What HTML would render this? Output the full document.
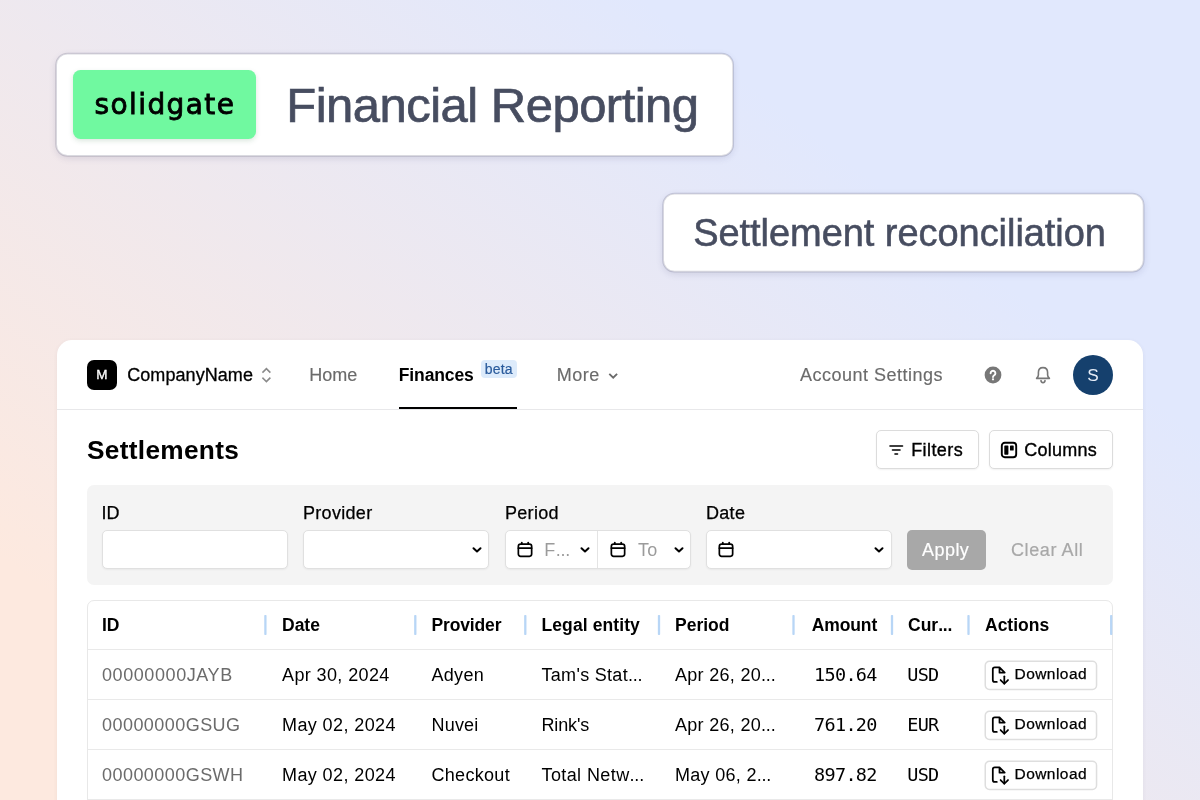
<!DOCTYPE html>
<html lang="en">
<head>
<meta charset="utf-8">
<title>Solidgate Financial Reporting – Settlement reconciliation</title>
<style>
*{box-sizing:border-box;margin:0;padding:0}
html,body{width:1200px;height:800px;overflow:hidden}
body{position:relative;font-family:"Liberation Sans",sans-serif;color:#000;
 background:linear-gradient(38deg,#fde9df 14%,#e1e8fd 75%);}
.abs,.t{position:absolute}
.t{white-space:nowrap;line-height:1;}
.cardsh{position:absolute;border-radius:11px;box-shadow:0 2px 7px 1px rgba(70,70,120,.16);}
.slate{color:#474d60}
#panel{position:absolute;left:57px;top:340px;width:1086px;height:480px;background:#fff;border-radius:15px 15px 0 0;
 box-shadow:0 1px 4px rgba(90,70,90,.07);}
.gray{color:#6b6b6b}
.btn{position:absolute;background:#fff;border:1px solid #dcdcdc;border-radius:5px;box-shadow:0 1px 2px rgba(0,0,0,.06)}
.inp{position:absolute;background:#fff;border:1px solid #e0e0e0;border-radius:5px;box-shadow:0 1px 2px rgba(0,0,0,.05);height:39px;top:530px}
.lbl{font-size:18px;top:503.800px;-webkit-text-stroke:.25px #000}
.sep{position:absolute;top:615px;width:2px;height:20px;background:#b7d5f4;border-radius:1px}
.hl{position:absolute;left:88px;width:1024px;height:1px;background:#e9e9e9}
.th{font-size:17.5px;font-weight:700;top:616.5px}
.td{font-size:18px}
.mono{font-family:"DejaVu Sans Mono","Liberation Mono",monospace;font-size:18.500px;letter-spacing:-.7px;margin-top:.1px}
.el{letter-spacing:-.2px}
.r1{top:666px}.r2{top:716px}.r3{top:766px}
.dlt{left:1014.500px;font-size:15.500px;letter-spacing:.45px;-webkit-text-stroke:.25px #000}
</style>
</head>
<body>
<div id="root" style="position:absolute;left:0;top:0;width:1200px;height:800px;will-change:transform">

<!-- Title card -->
<div class="cardsh" style="left:57px;top:55px;width:675px;height:100px"></div>
<svg class="abs" style="left:50px;top:48px" width="690" height="114"><rect x="6.125" y="5.625" width="677" height="102.250" rx="11.300" fill="#fff" stroke="rgba(56,56,92,.19)" stroke-width="1.750"/></svg>
<div class="abs" style="left:72.5px;top:70px;width:183px;height:69px;background:#70f9a0;border-radius:7.5px;box-shadow:0 2px 5px rgba(60,120,80,.18)"></div>
<div class="t" id="logo" style="left:94.5px;top:91px;font-family:'DejaVu Sans','Liberation Sans',sans-serif;font-size:28px;letter-spacing:1.4px;-webkit-text-stroke:.8px #000">solidgate</div>
<div class="t slate" id="h1" style="left:286.300px;top:81px;font-size:49px;letter-spacing:-.52px;-webkit-text-stroke:.7px #474d60">Financial Reporting</div>

<!-- Subtitle card -->
<div class="cardsh" style="left:664px;top:195px;width:479px;height:76px"></div>
<svg class="abs" style="left:657px;top:188px" width="494" height="90"><rect x="6.125" y="5.625" width="480.500" height="78" rx="11.300" fill="#fff" stroke="rgba(56,56,92,.19)" stroke-width="1.750"/></svg>
<div class="t slate" id="h2" style="left:693.200px;top:214px;font-size:38px;letter-spacing:-.05px;-webkit-text-stroke:.55px #474d60">Settlement reconciliation</div>

<!-- App panel -->
<div id="panel"></div>

<!-- nav -->
<div class="abs" style="left:87px;top:360px;width:30px;height:30px;background:#000;border-radius:7px"></div>
<div class="t" style="left:96.3px;top:368.300px;font-size:13.5px;color:#fff;-webkit-text-stroke:.3px #fff">M</div>
<div class="t" id="cn" style="left:127.200px;top:366px;font-size:18px;letter-spacing:.07px;-webkit-text-stroke:.3px #000">CompanyName</div>
<svg class="abs" style="left:260px;top:366px" width="14" height="18" viewBox="0 0 14 18" fill="none" stroke="#8a8a8a" stroke-width="1.600" stroke-linecap="square" stroke-linejoin="miter"><path d="M3 6 L6.400 2.600 L9.800 6"/><path d="M3 12.200 L6.400 15.600 L9.800 12.200"/></svg>
<div class="t gray" id="home" style="left:309.200px;top:366px;font-size:18px;letter-spacing:0px;-webkit-text-stroke:.15px #6b6b6b">Home</div>
<div class="t" id="fin" style="left:398.7px;top:367px;font-size:17.5px;font-weight:700;letter-spacing:-.1px">Finances</div>
<div class="abs" style="left:480.5px;top:360px;width:36.5px;height:17.5px;background:#ddebfb;border-radius:4px"></div>
<div class="t" id="beta" style="left:484.700px;top:362.300px;font-size:14px;color:#2a5b9c;letter-spacing:.2px;-webkit-text-stroke:.2px #2a5b9c">beta</div>
<div class="abs" style="left:399px;top:407px;width:118px;height:3px;background:#000"></div>
<div class="t gray" id="more" style="left:556.800px;top:366px;font-size:18px;letter-spacing:.5px;-webkit-text-stroke:.15px #6b6b6b">More</div>
<svg class="abs" style="left:607px;top:370px" width="12" height="12" viewBox="0 0 12 12" fill="none" stroke="#6b6b6b" stroke-width="1.850" stroke-linecap="butt" stroke-linejoin="miter"><path d="M2.300 3.800 L6.200 7.700 L10.100 3.800"/></svg>
<div class="t gray" id="acc" style="left:800px;top:366px;font-size:18px;letter-spacing:.5px;-webkit-text-stroke:.15px #6b6b6b">Account Settings</div>
<!-- help -->
<svg class="abs" style="left:984px;top:366px" width="18" height="18" viewBox="0 0 18 18"><circle cx="9" cy="9" r="8.4" fill="#777"/><path d="M6.6 7.2 a2.4 2.4 0 1 1 3.6 2.1 c-.8.5-1.2.8-1.2 1.7" fill="none" stroke="#fff" stroke-width="1.9" stroke-linecap="round"/><circle cx="9" cy="13.3" r="1.15" fill="#fff"/></svg>
<!-- bell -->
<svg class="abs" style="left:1033px;top:365px" width="20" height="20" viewBox="0 0 20 20" fill="none" stroke="#777" stroke-width="1.6" stroke-linecap="round" stroke-linejoin="round"><path d="M10 2.6 c-2.8 0-4.6 2-4.6 4.8 v2.6 c0 1.2-.6 2.2-1.8 3.4 h12.8 c-1.2-1.2-1.8-2.2-1.8-3.4 v-2.6 c0-2.8-1.8-4.8-4.6-4.800z"/><path d="M8 15.600 a2 2 0 0 0 4 0"/></svg>
<div class="abs" style="left:1073px;top:355px;width:40px;height:40px;border-radius:50%;background:#15406d"></div>
<div class="t" style="left:1087.300px;top:366.800px;font-size:17.200px;color:#e6edf8">S</div>
<div class="abs" style="left:57px;top:409px;width:1086px;height:1px;background:#e8e8ea"></div>

<!-- heading row -->
<div class="t" id="settl" style="left:87px;top:437.400px;font-size:26.25px;font-weight:700;letter-spacing:.3px">Settlements</div>
<div class="btn" style="left:876px;top:430px;width:103px;height:39px"></div>
<svg class="abs" style="left:888px;top:442px" width="16" height="16" viewBox="0 0 16 16" fill="none" stroke="#000" stroke-width="1.6" stroke-linecap="round"><path d="M2 4 H14.500"/><path d="M4.500 8 H12"/><path d="M7 12 H9.500"/></svg>
<div class="t" id="filters" style="left:911.2px;top:441px;font-size:18px;letter-spacing:.42px;-webkit-text-stroke:.35px #000">Filters</div>
<div class="btn" style="left:989px;top:430px;width:124px;height:39px"></div>
<svg class="abs" style="left:1000px;top:441px" width="18" height="18" viewBox="0 0 18 18"><rect x="1.800" y="1.800" width="14.400" height="14.400" rx="3" fill="none" stroke="#000" stroke-width="1.900"/><rect x="4.300" y="4.400" width="4.100" height="9.300" rx=".7" fill="#000"/><rect x="10" y="4.400" width="3.700" height="5.200" rx=".7" fill="#000"/></svg>
<div class="t" id="columns" style="left:1024.2px;top:441px;font-size:18px;letter-spacing:.25px;-webkit-text-stroke:.35px #000">Columns</div>

<!-- filter box -->
<div class="abs" style="left:87px;top:485px;width:1026px;height:100px;background:#f4f4f4;border-radius:7px"></div>
<div class="t lbl" style="left:101.500px">ID</div>
<div class="t lbl" style="left:303px;letter-spacing:.3px">Provider</div>
<div class="t lbl" style="left:505px;letter-spacing:.3px">Period</div>
<div class="t lbl" style="left:706px;letter-spacing:.3px">Date</div>
<div class="inp" style="left:102px;width:186px"></div>
<div class="inp" style="left:303px;width:186px"></div>
<div class="inp" style="left:504.600px;width:186px"></div>
<div class="abs" style="left:596.500px;top:531px;width:1px;height:37px;background:#e4e4e4"></div>
<div class="inp" style="left:706px;width:186px"></div>
<svg class="abs" style="left:470.7px;top:544px" width="12" height="12" viewBox="0 0 12 12" fill="none" stroke="#000" stroke-width="2" stroke-linecap="round" stroke-linejoin="round"><path d="M2.500 4.200 L6 7.500 L9.500 4.200"/></svg>
<svg class="abs" style="left:515.900px;top:540px" width="18" height="18" viewBox="0 0 18 18" fill="none" stroke="#000" stroke-width="1.7" stroke-linecap="round" stroke-linejoin="round"><rect x="2.35" y="4.1" width="13.3" height="12.2" rx="2.2"/><path d="M2.400 8.200 H15.600"/><path d="M5.800 2.500 V4.100"/><path d="M12.200 2.500 V4.100"/></svg>
<div class="t" style="left:544.300px;top:541px;font-size:18px;color:#9b9b9b;letter-spacing:.4px">F<span class="el">...</span></div>
<svg class="abs" style="left:579.3px;top:544px" width="12" height="12" viewBox="0 0 12 12" fill="none" stroke="#000" stroke-width="2" stroke-linecap="round" stroke-linejoin="round"><path d="M2.500 4.200 L6 7.500 L9.500 4.200"/></svg>
<svg class="abs" style="left:608.5px;top:540px" width="18" height="18" viewBox="0 0 18 18" fill="none" stroke="#000" stroke-width="1.7" stroke-linecap="round" stroke-linejoin="round"><rect x="2.35" y="4.1" width="13.3" height="12.2" rx="2.2"/><path d="M2.400 8.200 H15.600"/><path d="M5.800 2.500 V4.100"/><path d="M12.200 2.500 V4.100"/></svg>
<div class="t" style="left:638px;top:541px;font-size:18px;color:#9b9b9b;letter-spacing:.3px">To</div>
<svg class="abs" style="left:672.5px;top:544px" width="12" height="12" viewBox="0 0 12 12" fill="none" stroke="#000" stroke-width="2" stroke-linecap="round" stroke-linejoin="round"><path d="M2.500 4.200 L6 7.500 L9.500 4.200"/></svg>
<svg class="abs" style="left:716.8px;top:540px" width="18" height="18" viewBox="0 0 18 18" fill="none" stroke="#000" stroke-width="1.7" stroke-linecap="round" stroke-linejoin="round"><rect x="2.35" y="4.1" width="13.3" height="12.2" rx="2.2"/><path d="M2.400 8.200 H15.600"/><path d="M5.800 2.500 V4.100"/><path d="M12.200 2.500 V4.100"/></svg>
<svg class="abs" style="left:873.4px;top:544px" width="12" height="12" viewBox="0 0 12 12" fill="none" stroke="#000" stroke-width="2" stroke-linecap="round" stroke-linejoin="round"><path d="M2.500 4.200 L6 7.500 L9.500 4.200"/></svg>
<div class="abs" style="left:907px;top:530px;width:79px;height:40px;background:#a8a8a8;border-radius:5px"></div>
<div class="t" id="apply" style="left:922px;top:541px;font-size:18px;color:#fff;letter-spacing:.45px;-webkit-text-stroke:.2px #fff">Apply</div>
<div class="t" id="clear" style="left:1011px;top:541px;font-size:18px;color:#a8a8a8;letter-spacing:.6px;-webkit-text-stroke:.2px #a8a8a8">Clear All</div>

<!-- table -->
<div class="abs" style="left:87px;top:600px;width:1026px;height:230px;border:1px solid #e8e8e8;border-radius:7px 7px 0 0"></div>
<div class="hl" style="top:649px"></div>
<div class="hl" style="top:699px"></div>
<div class="hl" style="top:749px"></div>
<div class="hl" style="top:799px"></div>

<svg class="abs" style="left:87px;top:615px" width="1026" height="20" fill="#b8d6f6"><rect x="177.25" y="0" width="2.300" height="20" rx=".8"/><rect x="327.15" y="0" width="2.300" height="20" rx=".8"/><rect x="437.15" y="0" width="2.300" height="20" rx=".8"/><rect x="570.85" y="0" width="2.300" height="20" rx=".8"/><rect x="705.35" y="0" width="2.300" height="20" rx=".8"/><rect x="803.85" y="0" width="2.300" height="20" rx=".8"/><rect x="880.35" y="0" width="2.300" height="20" rx=".8"/><rect x="1023.05" y="0" width="2.300" height="20" rx=".8"/></svg>
<div class="t th" style="left:102px">ID</div>
<div class="t th" style="left:282px">Date</div>
<div class="t th" style="left:431.500px;letter-spacing:-.15px">Provider</div>
<div class="t th" style="left:541.500px;letter-spacing:.1px">Legal entity</div>
<div class="t th" style="left:675px">Period</div>
<div class="t th" style="left:811.700px;letter-spacing:-.1px">Amount</div>
<div class="t th" style="left:908px">Cur<span class="el">...</span></div>
<div class="t th" style="left:985px">Actions</div>

<div class="t td gray r1" style="left:102px;letter-spacing:.58px">00000000JAYB</div>
<div class="t td r1" style="left:282px;letter-spacing:.39px">Apr 30, 2024</div>
<div class="t td r1" style="left:431.500px;letter-spacing:.3px">Adyen</div>
<div class="t td r1" style="left:541.500px;letter-spacing:.3px">Tam's Stat<span class="el">...</span></div>
<div class="t td r1" style="left:675px;letter-spacing:.3px">Apr 26, 20<span class="el">...</span></div>
<div class="t mono r1" style="left:814.100px">150.64</div>
<div class="t mono r1" style="left:907.200px">USD</div>
<svg class="abs" style="left:980px;top:655.70px" width="124" height="40" viewBox="0 0 124 40" fill="none" stroke-linecap="round" stroke-linejoin="round"><rect x="5.250" y="5.200" width="111.300" height="28.200" rx="4.200" fill="#fff" stroke="#dedede" stroke-width="1.500"/><g stroke="#000" stroke-width="1.750" transform="translate(4.500 4.250)"><path d="M12.300 21.700 H10.300 a2 2 0 0 1 -2 -2 V9.100 a2 2 0 0 1 2 -2 H15 L20.200 12.400 H15 V7.300"/><path d="M19.800 16 V23.300"/><path d="M16.100 19.800 L19.800 23.500 L23.500 19.800"/></g></svg><div class="t dlt" style="top:665.85px">Download</div>

<div class="t td gray r2" style="left:102px;letter-spacing:.45px">00000000GSUG</div>
<div class="t td r2" style="left:282px;letter-spacing:.4px">May 02, 2024</div>
<div class="t td r2" style="left:431.500px;letter-spacing:.2px">Nuvei</div>
<div class="t td r2" style="left:541.400px;letter-spacing:-.1px">Rink's</div>
<div class="t td r2" style="left:675px;letter-spacing:.3px">Apr 26, 20<span class="el">...</span></div>
<div class="t mono r2" style="left:814.100px">761.20</div>
<div class="t mono r2" style="left:907.200px">EUR</div>
<svg class="abs" style="left:980px;top:705.70px" width="124" height="40" viewBox="0 0 124 40" fill="none" stroke-linecap="round" stroke-linejoin="round"><rect x="5.250" y="5.200" width="111.300" height="28.200" rx="4.200" fill="#fff" stroke="#dedede" stroke-width="1.500"/><g stroke="#000" stroke-width="1.750" transform="translate(4.500 4.250)"><path d="M12.300 21.700 H10.300 a2 2 0 0 1 -2 -2 V9.100 a2 2 0 0 1 2 -2 H15 L20.200 12.400 H15 V7.300"/><path d="M19.800 16 V23.300"/><path d="M16.100 19.800 L19.800 23.500 L23.500 19.800"/></g></svg><div class="t dlt" style="top:715.85px">Download</div>

<div class="t td gray r3" style="left:102px;letter-spacing:.45px">00000000GSWH</div>
<div class="t td r3" style="left:282px;letter-spacing:.4px">May 02, 2024</div>
<div class="t td r3" style="left:431.500px;letter-spacing:.3px">Checkout</div>
<div class="t td r3" style="left:541.500px;letter-spacing:.4px">Total Netw<span class="el">...</span></div>
<div class="t td r3" style="left:675px;letter-spacing:.3px">May 06, 2<span class="el">...</span></div>
<div class="t mono r3" style="left:814.100px">897.82</div>
<div class="t mono r3" style="left:907.200px">USD</div>
<svg class="abs" style="left:980px;top:755.70px" width="124" height="40" viewBox="0 0 124 40" fill="none" stroke-linecap="round" stroke-linejoin="round"><rect x="5.250" y="5.200" width="111.300" height="28.200" rx="4.200" fill="#fff" stroke="#dedede" stroke-width="1.500"/><g stroke="#000" stroke-width="1.750" transform="translate(4.500 4.250)"><path d="M12.300 21.700 H10.300 a2 2 0 0 1 -2 -2 V9.100 a2 2 0 0 1 2 -2 H15 L20.200 12.400 H15 V7.300"/><path d="M19.800 16 V23.300"/><path d="M16.100 19.800 L19.800 23.500 L23.500 19.800"/></g></svg><div class="t dlt" style="top:765.85px">Download</div>

</div>
</body>
</html>
